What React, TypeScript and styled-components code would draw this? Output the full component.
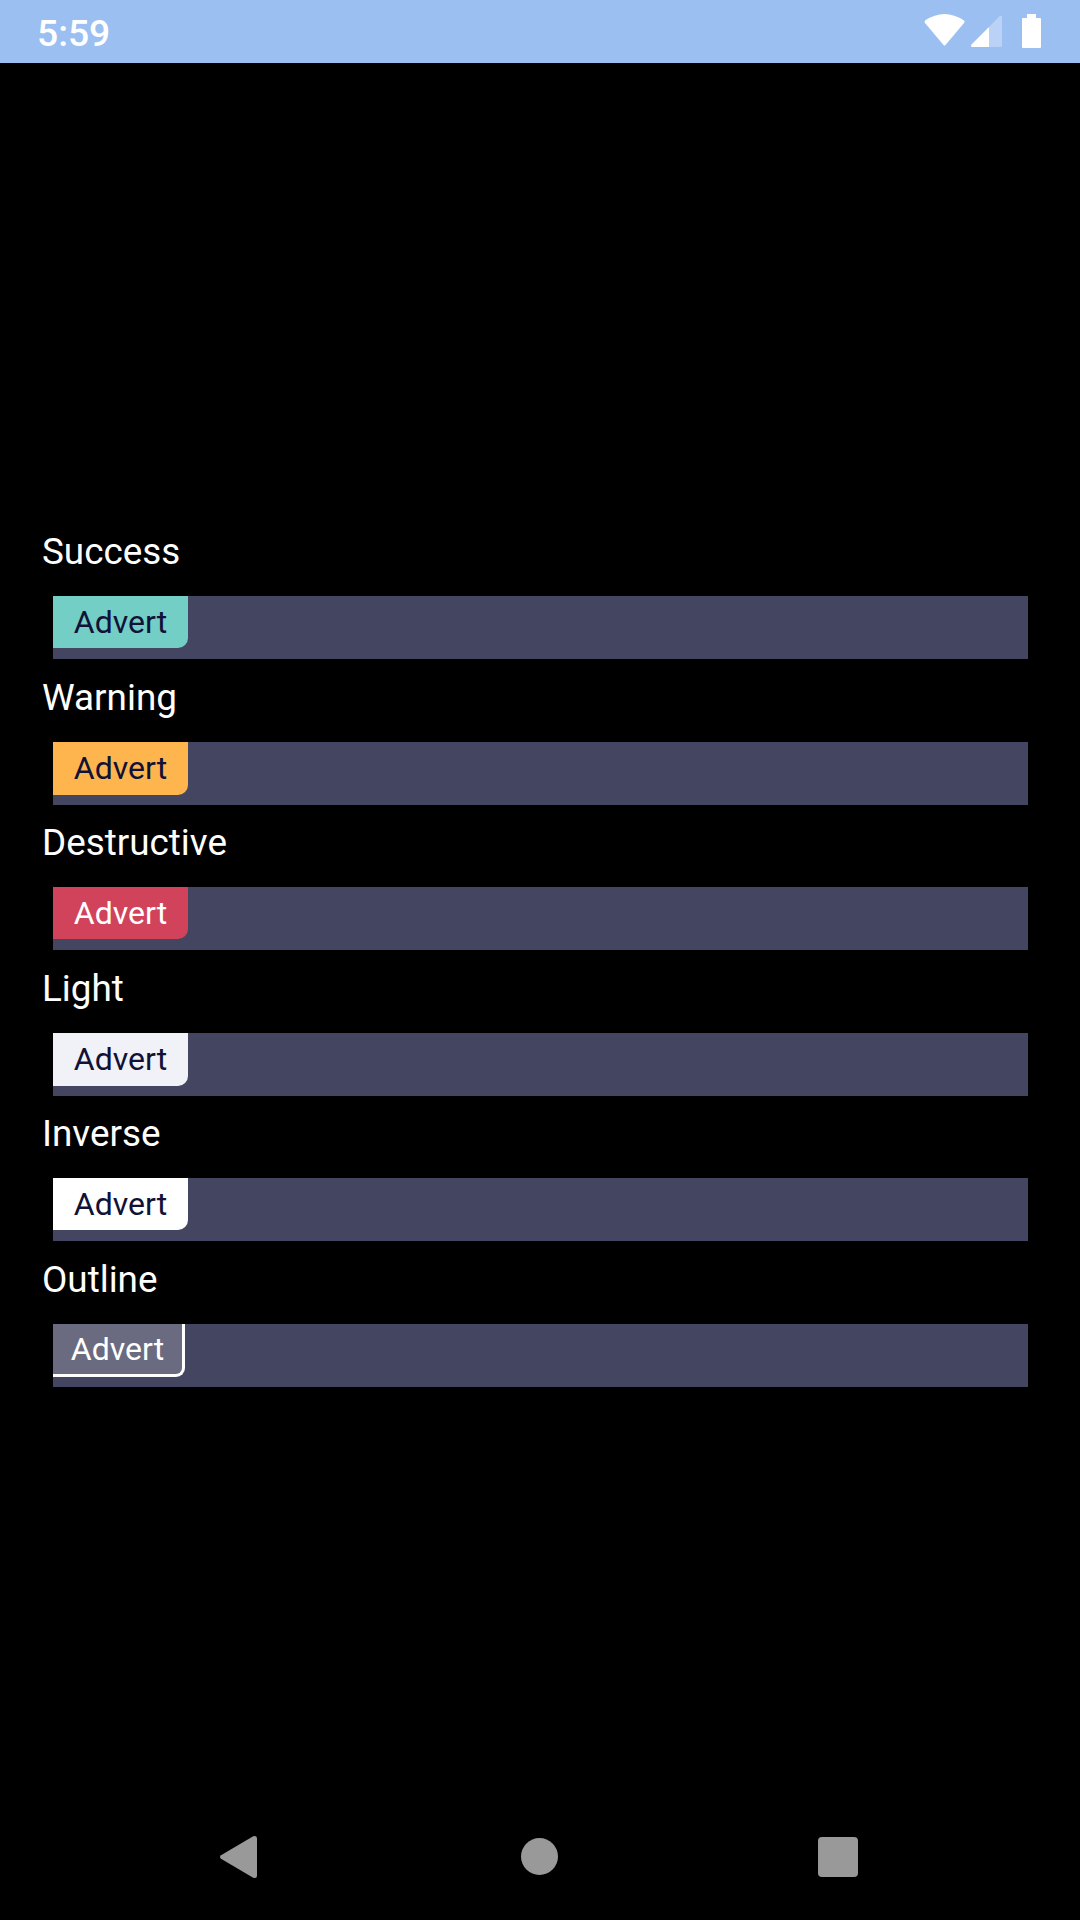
import React from "react";
import styled, { createGlobalStyle } from "styled-components";

const Global = createGlobalStyle`
  html, body { margin: 0; background: #000; }
  * { box-sizing: border-box; }
`;
const Screen = styled.div`
  width: 1080px; height: 1920px; display: flex; flex-direction: column;
  background: #000; color: #fff; font-family: Roboto, sans-serif; overflow: hidden;
`;
const StatusBar = styled.header`
  height: 63px; flex: none; padding: 0 38px 0 37px; display: flex; justify-content: space-between;
  background: #9cbff2;
`;
const Clock = styled.time`
  font-size: 37.2px; font-weight: 500; line-height: 67px;
`;
const StatusIcons = styled.svg`
  width: 120px; height: 63px; flex: none;
`;
const Content = styled.main`
  flex: 1; padding: 465px 42px 0;
`;
const Section = styled.section`
  height: 145.5px;
`;
const Label = styled.h2`
  margin: 0; height: 68px; font-size: 36.85px; line-height: 47px; font-weight: 400;
`;
const Strip = styled.div`
  height: 63px; margin: 0 10px 0 11px; display: flex; align-items: flex-start; background: #444560;
`;
const Badge = styled.span<{ $bg: string; $fg: string; $height: number; $outline?: boolean }>`
  height: ${p => p.$height}px; width: ${p => (p.$outline ? 132 : 135)}px;
  display: flex; justify-content: center;
  font-size: 32px; line-height: ${p => (p.$outline ? 50 : 52)}px;
  color: ${p => p.$fg}; background: ${p => p.$bg};
  border-radius: 0 0 10px 0;
  ${p => p.$outline && "border: solid #fff; border-width: 0 3px 3px 0; border-radius: 0 0 9px 0;"}
`;
const NavBar = styled.nav`
  height: 126px; flex: none;
`;
const badges = [
  { name: "Success", bg: "#73cec6", fg: "#111236", height: 52 },
  { name: "Warning", bg: "#ffb54d", fg: "#111236", height: 53 },
  { name: "Destructive", bg: "#d1435b", fg: "#fff", height: 52 },
  { name: "Light", bg: "#f1f2f8", fg: "#111236", height: 53 },
  { name: "Inverse", bg: "#fff", fg: "#111236", height: 52 },
  { name: "Outline", bg: "#6a6b80", fg: "#fff", height: 53, outline: true },
];

export default function App() {
  return (
    <Screen>
      <Global />
      <StatusBar>
        <Clock>5:59</Clock>
        <StatusIcons viewBox="922 0 120 63" fill="#fff">
          <path d="M925 20.500Q944.500 7.500 964 20.500Q965.200 21.500 964 23L945.500 45Q944.500 46 943.500 45L925 23Q924 21.500 925 20.500Z" />
          <path d="M989 27L999 16.800Q1002 14.500 1002 17.500V45.500Q1002 47 1000.500 47H989Z" opacity=".3" />
          <path d="M989 27V47H972Q970.200 46.500 971.500 44.500Z" />
          <path d="M1027 14h9v4h4q1 0 1 1v28q0 1-1 1h-17q-1 0-1-1V19q0-1 1-1h4z" />
        </StatusIcons>
      </StatusBar>
      <Content>
        {badges.map(b => (
          <Section key={b.name}>
            <Label>{b.name}</Label>
            <Strip>
              <Badge $bg={b.bg} $fg={b.fg} $height={b.height} $outline={b.outline}>Advert</Badge>
            </Strip>
          </Section>
        ))}
      </Content>
      <NavBar>
        <svg width="1080" height="126" viewBox="0 1794 1080 126" fill="#999">
          <path d="M221 1855.200L253.200 1836.300Q257 1835 257 1838.500V1875.500Q257 1879 253.200 1877.700L221 1858.800Q219 1857 221 1855.200Z" />
          <circle cx="539.500" cy="1856.500" r="18.500" />
          <rect x="818" y="1837" width="40" height="40" rx="4" />
        </svg>
      </NavBar>
    </Screen>
  );
}
